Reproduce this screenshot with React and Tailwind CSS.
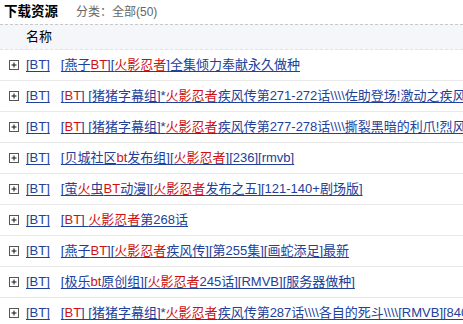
import React from "react";

const rows = [
  { pre: false, title: "[燕子BT][火影忍者]全集倾力奉献永久做种" },
  { title: "[BT] [猪猪字幕组]*火影忍者疾风传第271-272话\\\\\\\\佐助登场!激动之疾风传第271-272话" },
  { title: "[BT] [猪猪字幕组]*火影忍者疾风传第277-278话\\\\\\\\撕裂黑暗的利爪!烈风之战" },
  { title: "[贝城社区bt发布组][火影忍者][236][rmvb]" },
  { title: "[萤火虫BT动漫][火影忍者发布之五][121-140+剧场版]" },
  { title: "[BT] 火影忍者第268话" },
  { title: "[燕子BT][火影忍者疾风传][第255集][画蛇添足]最新" },
  { title: "[极乐bt原创组][火影忍者245话][RMVB][服务器做种]" },
  { title: "[BT] [猪猪字幕组]*火影忍者疾风传第287话\\\\\\\\各自的死斗\\\\\\\\[RMVB][840x480]" },
];

const highlight = (text) =>
  text.split(/(火影忍者|BT|bt|火)/).map((part, i) =>
    /^(火影忍者|BT|bt|火)$/.test(part) ? (
      <span key={i} className="text-[#cc1111]">
        {part}
      </span>
    ) : (
      <span key={i}>{part}</span>
    )
  );

const PlusBox = () => (
  <svg width="10" height="10" viewBox="0 0 10 10" className="shrink-0">
    <rect x="0.5" y="0.5" width="9" height="9" fill="#fff" stroke="#555" />
    <path d="M2.5 5h5M5 2.5v5" stroke="#111" strokeWidth="1" />
  </svg>
);

const App = () => {
  return (
    <div
      className="w-[463px] h-[324px] overflow-hidden bg-white"
      style={{ fontFamily: '"Liberation Sans", "Noto Sans CJK SC", sans-serif' }}
    >
      <div className="h-[24px] flex items-center px-[4px] gap-[18px]">
        <span className="text-[13.5px] font-bold text-black">下载资源</span>
        <span className="text-[12px] text-[#666]">分类：全部(50)</span>
      </div>
      <div className="h-[26px] border-t border-dashed border-[#c8c8c8] border-b border-b-[#e2e2e2] bg-[#f5f6fa] flex items-center pl-[26px]">
        <span className="text-[13px] text-black">名称</span>
      </div>
      <div>
        {rows.map((row, i) => (
          <div
            key={i}
            className="h-[31px] border-b border-[#e8e8e8] flex items-center pl-[9px] whitespace-nowrap text-[13px]"
          >
            <PlusBox />
            <a href="#" className="ml-[7px] text-[#22409a] underline underline-offset-2">
              [BT]
            </a>
            <a href="#" className="ml-[11px] text-[#22409a] underline underline-offset-2">
              {highlight(row.title)}
            </a>
          </div>
        ))}
      </div>
    </div>
  );
};

export default App;
